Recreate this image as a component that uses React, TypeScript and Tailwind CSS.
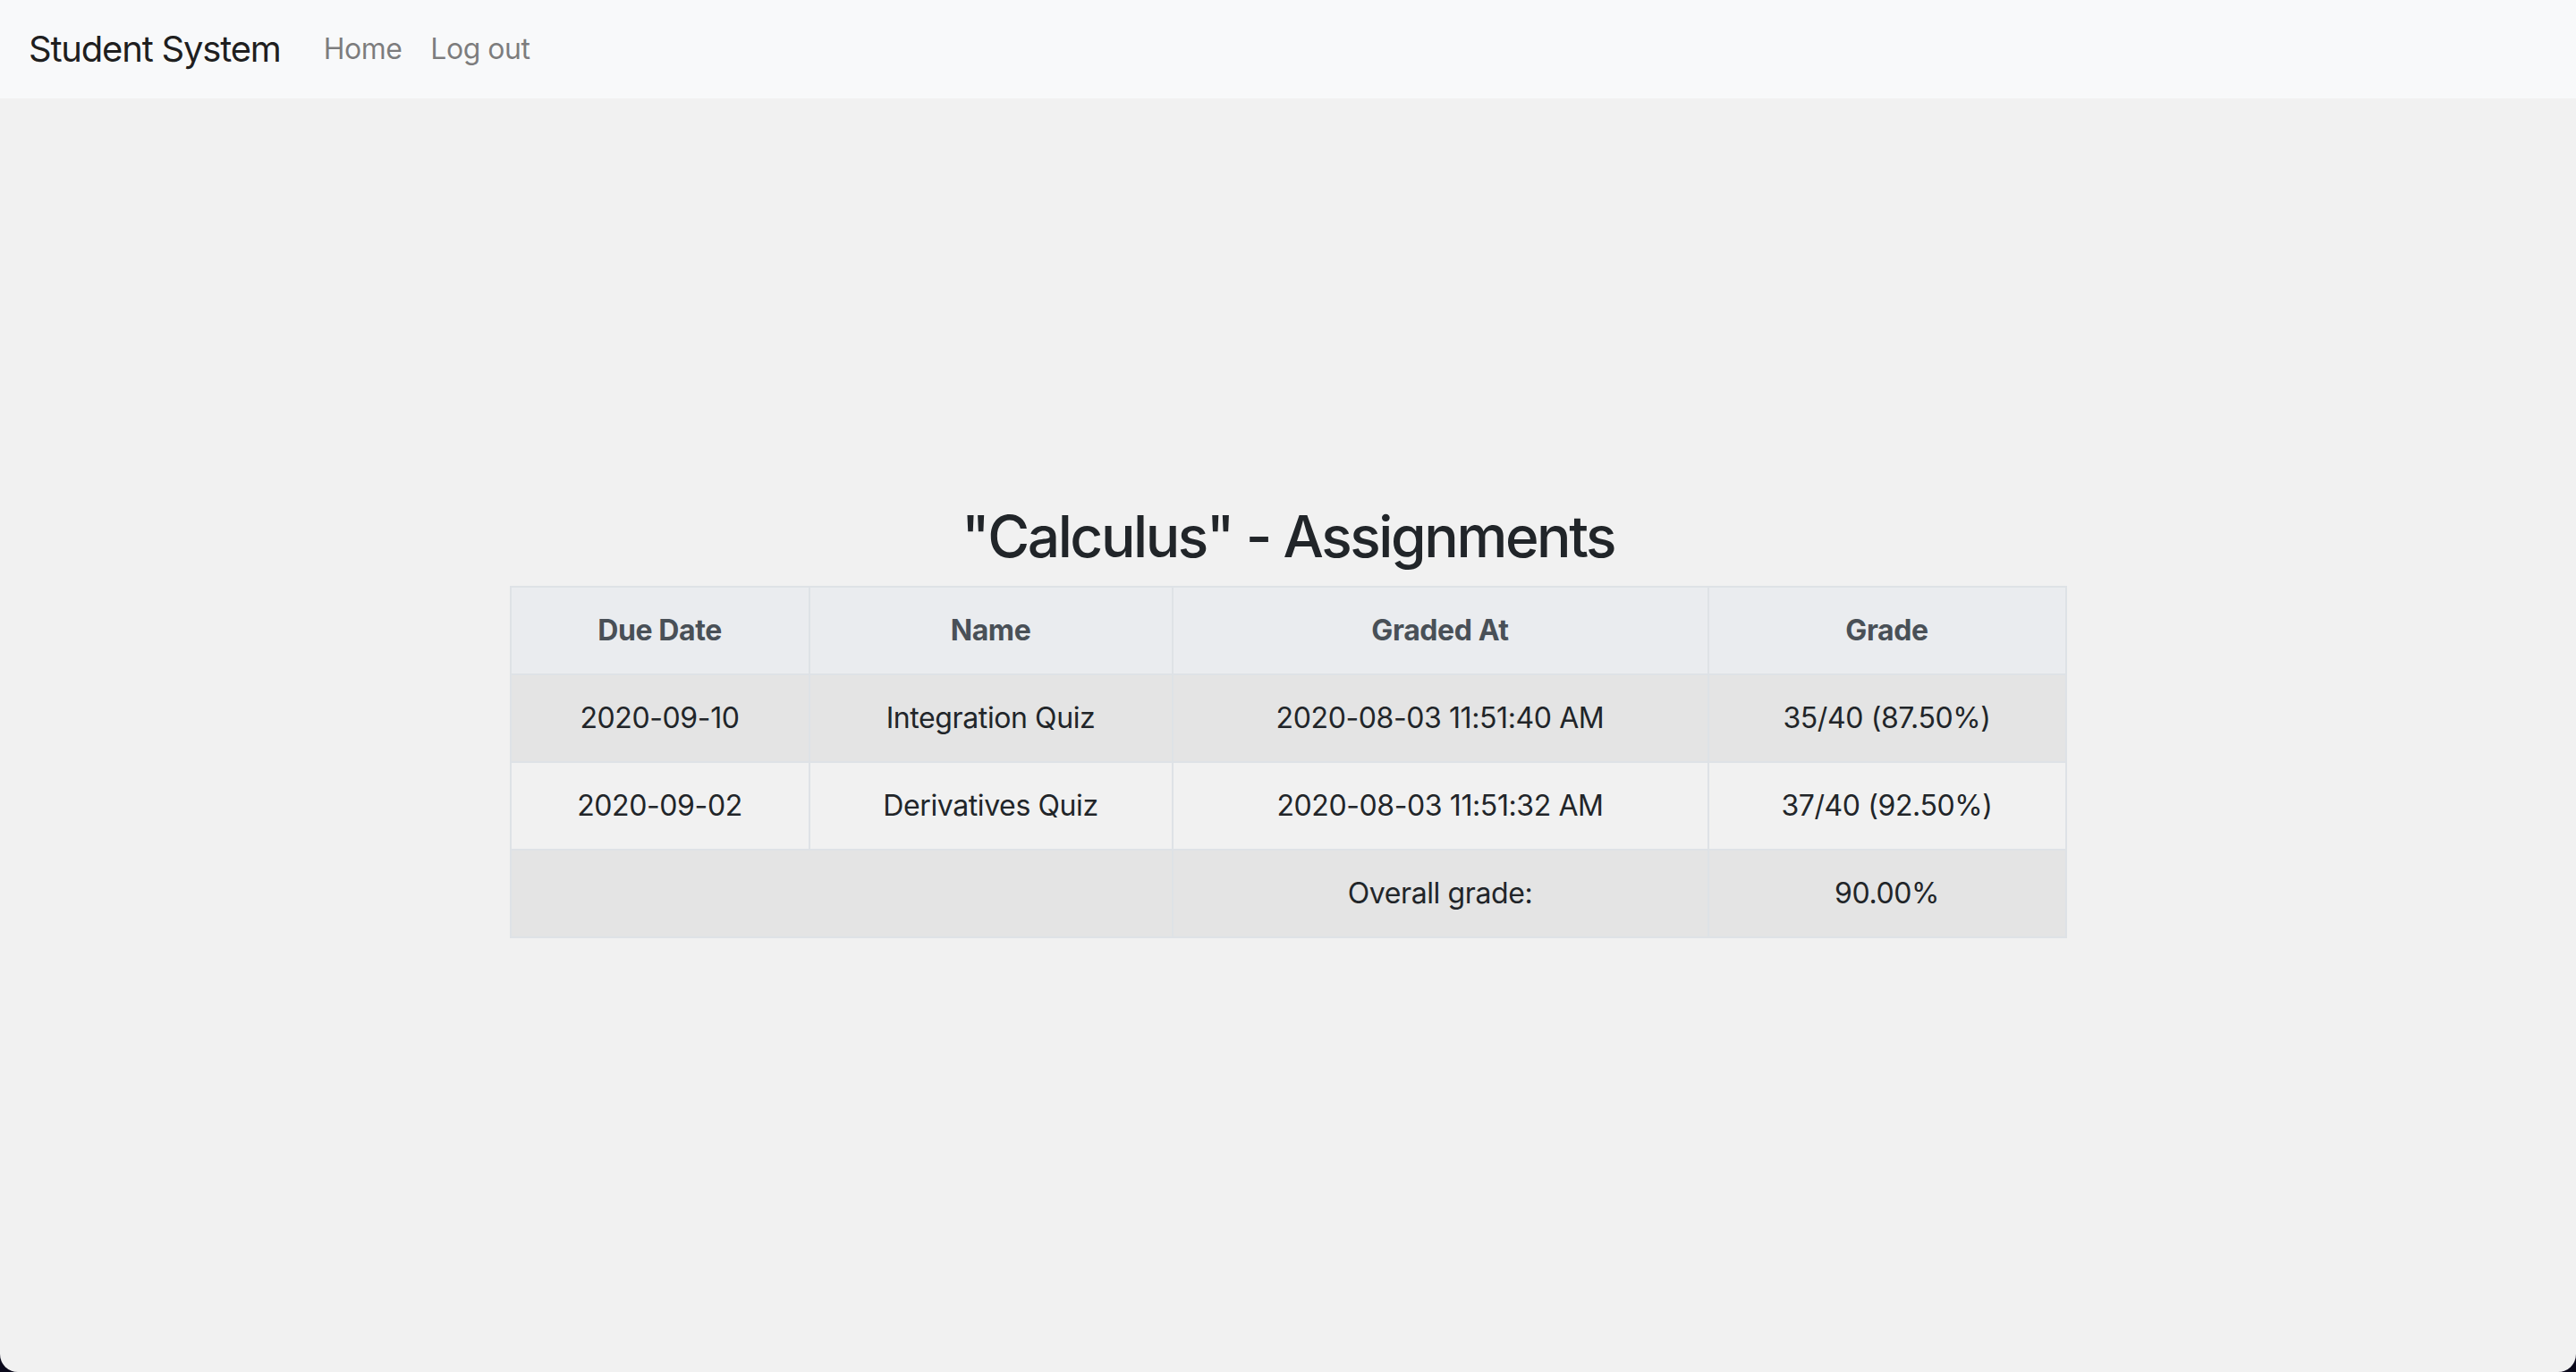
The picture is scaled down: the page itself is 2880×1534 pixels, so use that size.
import React from "react"

type Assignment = {
  due: string
  name: string
  gradedAt: string
  grade: string
}

const assignments: Assignment[] = [
  { due: "2020-09-10", name: "Integration Quiz", gradedAt: "2020-08-03 11:51:40 AM", grade: "35/40 (87.50%)" },
  { due: "2020-09-02", name: "Derivatives Quiz", gradedAt: "2020-08-03 11:51:32 AM", grade: "37/40 (92.50%)" },
]

const cell = "border-2 border-[#dee2e6] px-[24px] py-[24px] text-center leading-[48px]"

export default function App() {
  return (
    <div className="h-screen bg-[#0b0a1c]">
      <div
        className="flex h-full flex-col overflow-hidden rounded-b-[20px] bg-[#f1f1f1] text-[#212529]"
        style={{ fontFamily: "Inter, 'Liberation Sans', sans-serif" }}
      >
        {/* Navbar */}
        <nav className="flex h-[110px] shrink-0 items-center bg-[#f8f9fa] px-[32px]">
          <span className="mr-[32px] text-[40px] leading-[60px] tracking-[-1.2px] text-black/90">Student System</span>
          <a className="px-[16px] text-[32px] leading-[48px] tracking-[-0.5px] text-black/50" href="#">
            Home
          </a>
          <a className="px-[16px] text-[32px] leading-[48px] tracking-[-0.5px] text-black/50" href="#">
            Log out
          </a>
        </nav>

        {/* Content */}
        <main className="flex flex-1 flex-col items-center pt-[452px]">
          <h2 className="mb-[16px] text-[64px] font-medium leading-[1.2] tracking-[-2.4px]">"Calculus" - Assignments</h2>
          <table className="w-[1739px] table-fixed border-collapse text-[32px] tracking-[-0.4px]">
            <colgroup>
              <col className="w-[334px]" />
              <col className="w-[406px]" />
              <col className="w-[599px]" />
              <col className="w-[400px]" />
            </colgroup>
            <thead>
              <tr className="bg-[#eaecef] text-[#495057]">
                <th className={`${cell} font-bold`}>Due Date</th>
                <th className={`${cell} font-bold`}>Name</th>
                <th className={`${cell} font-bold`}>Graded At</th>
                <th className={`${cell} font-bold`}>Grade</th>
              </tr>
            </thead>
            <tbody>
              {assignments.map((a, i) => (
                <tr key={a.name} className={i % 2 === 0 ? "bg-[#e4e4e4]" : ""}>
                  <td className={cell}>{a.due}</td>
                  <td className={cell}>{a.name}</td>
                  <td className={cell}>{a.gradedAt}</td>
                  <td className={cell}>{a.grade}</td>
                </tr>
              ))}
              <tr className="bg-[#e4e4e4]">
                <td className={cell} colSpan={2}></td>
                <td className={cell}>Overall grade:</td>
                <td className={cell}>90.00%</td>
              </tr>
            </tbody>
          </table>
        </main>
      </div>
    </div>
  )
}
